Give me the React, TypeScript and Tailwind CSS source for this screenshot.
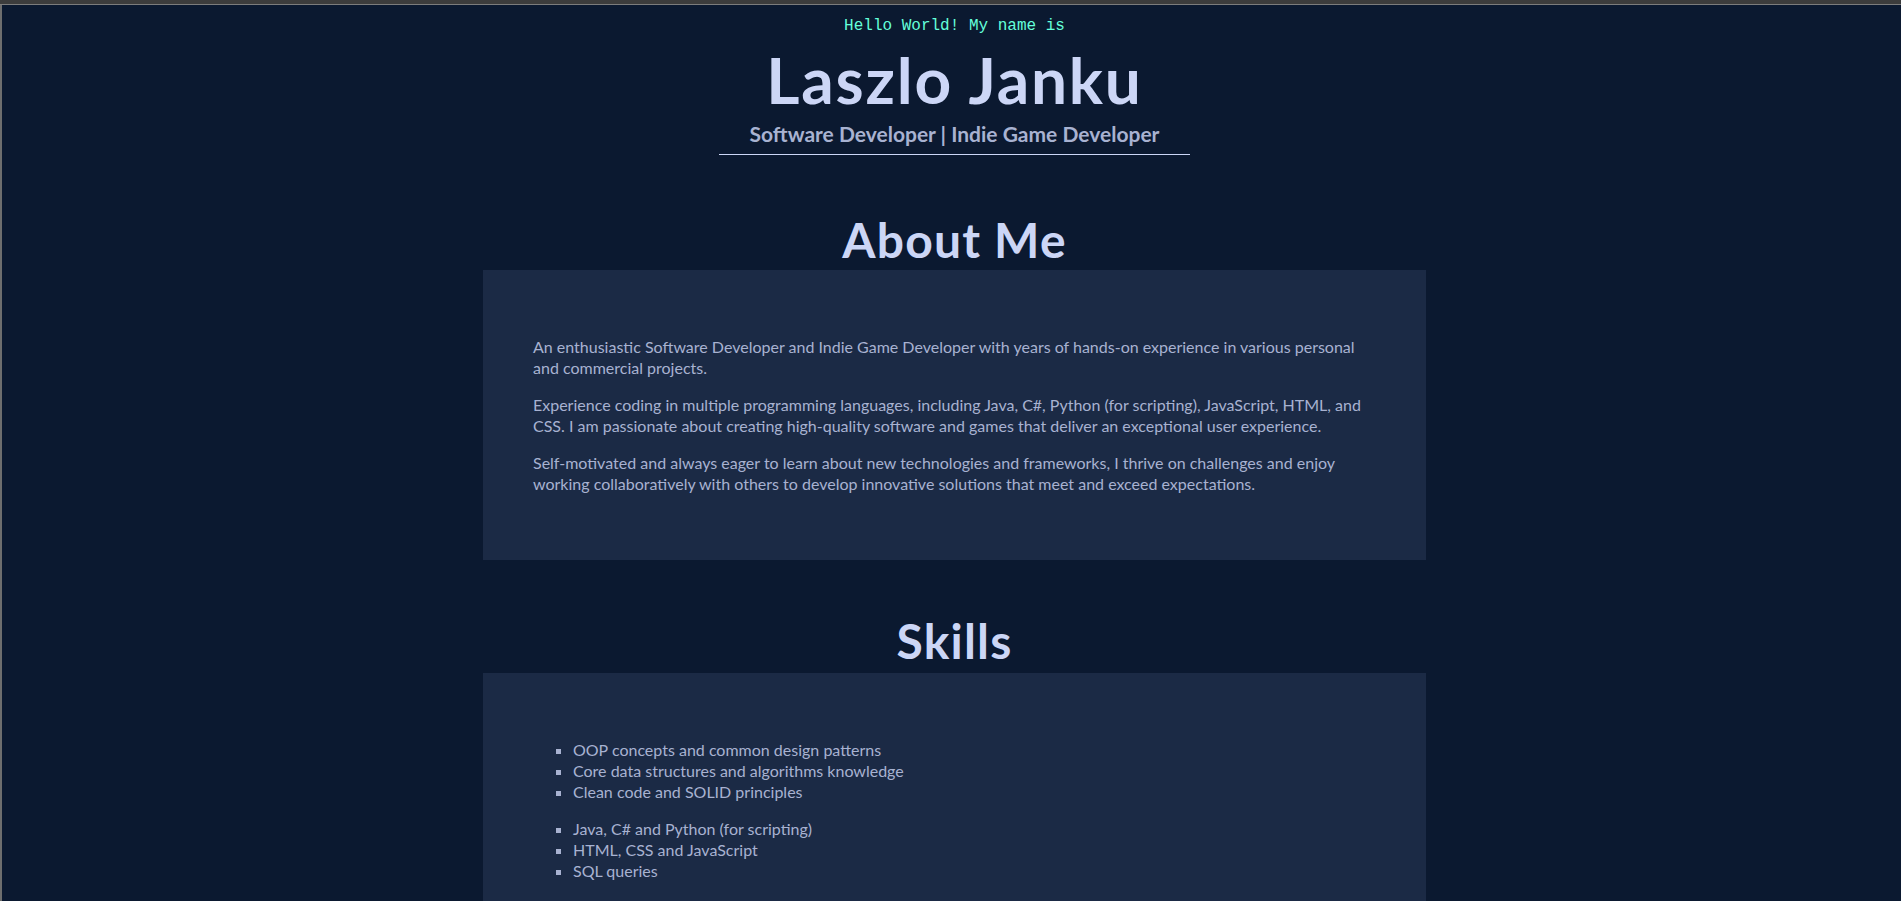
import React from 'react';

const aboutParagraphs = [
  'An enthusiastic Software Developer and Indie Game Developer with years of hands-on experience in various personal and commercial projects.',
  'Experience coding in multiple programming languages, including Java, C#, Python (for scripting), JavaScript, HTML, and CSS. I am passionate about creating high-quality software and games that deliver an exceptional user experience.',
  'Self-motivated and always eager to learn about new technologies and frameworks, I thrive on challenges and enjoy working collaboratively with others to develop innovative solutions that meet and exceed expectations.',
];

const skillGroups = [
  ['OOP concepts and common design patterns', 'Core data structures and algorithms knowledge', 'Clean code and SOLID principles'],
  ['Java, C# and Python (for scripting)', 'HTML, CSS and JavaScript', 'SQL queries'],
];

interface SectionProps {
  title: string;
  className: string;
  cardClassName: string;
  children: React.ReactNode;
}

const Section: React.FC<SectionProps> = ({ title, className, cardClassName, children }) => (
  <section className={`flex flex-col items-center ${className}`}>
    <h2 className="text-[48px] font-bold leading-[1.2] tracking-[1.2px] text-[#ccd6f6]">{title}</h2>
    <div className={`w-[943px] bg-[#1b2a45] px-[50px] text-[16px] leading-[21px] text-[#a8b2d1] ${cardClassName}`}>
      {children}
    </div>
  </section>
);

const App: React.FC = () => {
  return (
    <div className="min-h-screen bg-[#0b1930] font-['Lato',sans-serif]">
      <div className="h-[5px] bg-[#3c3c3c] border-b border-[#7c7c7c]" />
      <div className="border-l-2 border-[#6e6e6e] min-h-[895px]">
        <div className="pl-[6px] flex flex-col items-center pb-[60px]">
          <header className="flex flex-col items-center pt-[11px]">
            <p className="font-['Liberation_Mono',monospace] text-[16px] leading-[20px] text-[#64ffda]">
              Hello World! My name is
            </p>
            <h1 className="mt-[6px] text-[64px] font-bold leading-[1.2] tracking-[1.8px] text-[#ccd6f6]">
              Laszlo Janku
            </h1>
            <p className="mt-[2px] text-[21px] font-bold leading-[1.2] text-[#a8b2d1]">
              Software Developer | Indie Game Developer
            </p>
            <div className="mt-[8px] w-[471px] h-px bg-[#ccd6f6]" />
          </header>

          <Section title="About Me" className="mt-[56px]" cardClassName="mt-[1px] py-[50px]">
            {aboutParagraphs.map((text) => (
              <p key={text} className="my-[16px]">{text}</p>
            ))}
          </Section>

          <Section title="Skills" className="mt-[52px]" cardClassName="mt-[4px] pt-[50px] pb-[80px]">
            {skillGroups.map((group, i) => (
              <ul key={i} className="my-[16px] pl-[40px] list-[square] marker:text-[#a8b2d1]">
                {group.map((item) => (
                  <li key={item}>{item}</li>
                ))}
              </ul>
            ))}
          </Section>
        </div>
      </div>
    </div>
  );
};

export default App;
